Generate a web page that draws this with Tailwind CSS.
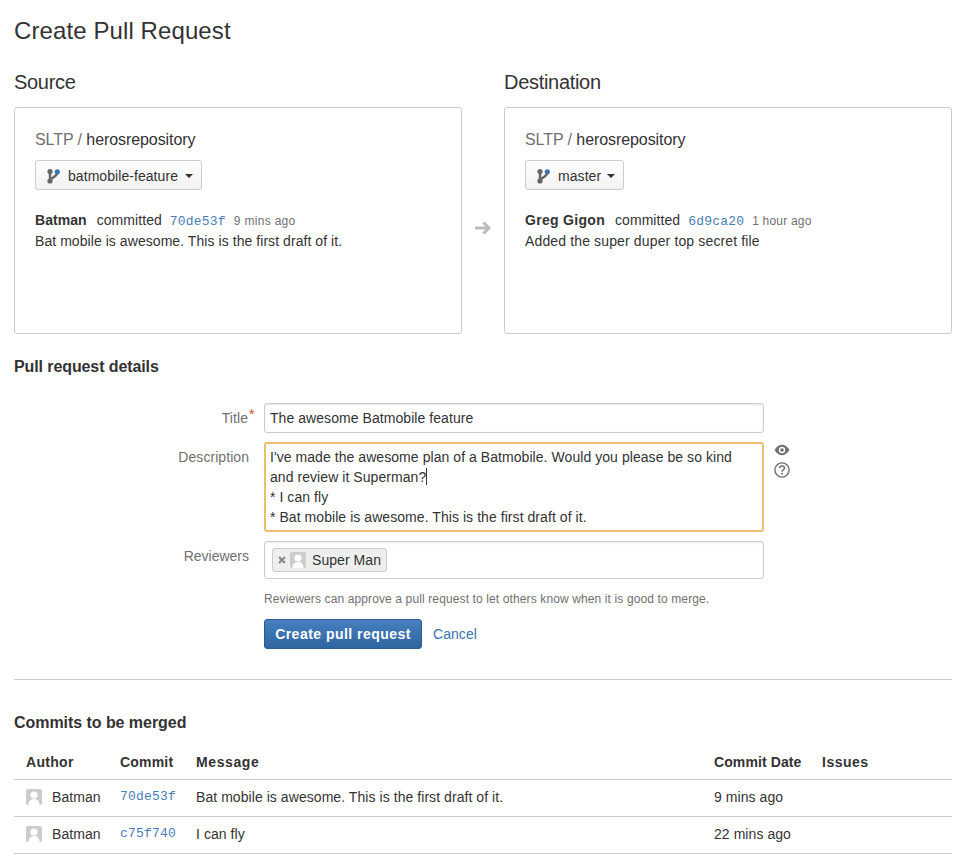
<!DOCTYPE html>
<html lang="en">
<head>
    <meta charset="UTF-8">
    <title>Create Pull Request</title>
    <script src="https://cdn.jsdelivr.net/npm/@tailwindcss/browser@4"></script>
</head>
<body class="bg-white text-[#333] font-['Liberation_Sans',Arial,sans-serif] text-[14px] leading-[20px] tracking-[0.06px]">
    <div class="pl-[14px] pr-[8px] h-[864px] overflow-hidden">
        <h1 class="text-[24px] leading-[30px] pt-[16px] text-[#333] tracking-[0.1px]">Create Pull Request</h1>

        <!-- Source / destination -->
        <div class="flex mt-[22px]">
            <div class="w-[448px]">
                <h2 class="text-[20px] leading-[28px] mb-[11px] tracking-[-0.3px]">Source</h2>
                <div class="h-[227px] border border-[#ccc] rounded-[3px] pt-[21px] px-[20px]">
                    <div class="text-[16px] leading-[22px] text-[#333] tracking-[-0.08px]"><span class="text-[#707070]">SLTP</span> <span class="text-[#707070]">/</span> herosrepository</div>
                    <button class="mt-[9px] h-[30px] flex items-center pl-[9px] pr-[8px] pt-[2px] border border-[#ccc] rounded-[3px] bg-gradient-to-b from-white to-[#f2f2f2]">
                        <svg class="w-[16px] h-[16px] mr-[7px]" viewBox="0 0 16 16"><path d="M5 4v9M12 5c0 4.500-6 3.500-7 8" stroke="#666" stroke-width="2.400" fill="none"/><circle cx="5" cy="3.500" r="2.600" fill="#666"/><circle cx="5" cy="13" r="2.600" fill="#666"/><circle cx="12.300" cy="3.800" r="2.600" fill="#3b73af"/></svg>
                        batmobile-feature
                        <span class="ml-[7px] w-0 h-0 border-x-[4px] border-x-transparent border-t-[4px] border-t-[#333]"></span>
                    </button>
                    <div class="mt-[20px] flex items-baseline">
                        <b>Batman</b><span class="ml-[10px]">committed</span>
                        <span class="ml-[8px] font-['Liberation_Mono',monospace] text-[13px] tracking-[0.2px] text-[#4a7db8]">70de53f</span>
                        <span class="ml-[8px] text-[12px] tracking-[0.3px] text-[#707070]">9 mins ago</span>
                    </div>
                    <div class="-mt-[1px]">Bat mobile is awesome. This is the first draft of it.</div>
                </div>
            </div>

            <div class="w-[42px] flex items-start justify-center pt-[153px]">
                <svg class="w-[16px] h-[14px]" viewBox="0 0 16 14"><path d="M0 7h13.500M8.500 1.500L14 7l-5.500 5.500" stroke="#bbb" stroke-width="3" fill="none"/></svg>
            </div>

            <div class="w-[448px]">
                <h2 class="text-[20px] leading-[28px] mb-[11px] tracking-[-0.3px]">Destination</h2>
                <div class="h-[227px] border border-[#ccc] rounded-[3px] pt-[21px] px-[20px]">
                    <div class="text-[16px] leading-[22px] text-[#333] tracking-[-0.08px]"><span class="text-[#707070]">SLTP</span> <span class="text-[#707070]">/</span> herosrepository</div>
                    <button class="mt-[9px] h-[30px] flex items-center pl-[9px] pr-[8px] pt-[2px] border border-[#ccc] rounded-[3px] bg-gradient-to-b from-white to-[#f2f2f2]">
                        <svg class="w-[16px] h-[16px] mr-[7px]" viewBox="0 0 16 16"><path d="M5 4v9M12 5c0 4.500-6 3.500-7 8" stroke="#666" stroke-width="2.400" fill="none"/><circle cx="5" cy="3.500" r="2.600" fill="#666"/><circle cx="5" cy="13" r="2.600" fill="#666"/><circle cx="12.300" cy="3.800" r="2.600" fill="#3b73af"/></svg>
                        master
                        <span class="ml-[6px] w-0 h-0 border-x-[4px] border-x-transparent border-t-[4px] border-t-[#333]"></span>
                    </button>
                    <div class="mt-[20px] flex items-baseline">
                        <b class="tracking-[0.3px]">Greg Gigon</b><span class="ml-[10px]">committed</span>
                        <span class="ml-[8px] font-['Liberation_Mono',monospace] text-[13px] tracking-[0.2px] text-[#4a7db8]">6d9ca20</span>
                        <span class="ml-[8px] text-[12px] tracking-[0.2px] text-[#707070]">1 hour ago</span>
                    </div>
                    <div class="-mt-[1px] tracking-[0.14px]">Added the super duper top secret file</div>
                </div>
            </div>
        </div>

        <h3 class="mt-[23px] text-[16px] leading-[20px] font-bold tracking-[-0.1px]">Pull request details</h3>

        <!-- Form -->
        <div class="mt-[26px] grid grid-cols-[235px_500px_auto] gap-x-[15px] gap-y-[9px]">
            <label class="relative text-right text-[#707070] pt-[5px] pr-[1px]">Title<span class="absolute left-[235px] top-[1px] text-[#d04437]">*</span></label>
            <div class="h-[30px] border border-[#ccc] rounded-[3px] px-[5px] leading-[28px] shadow-[inset_0_1px_2px_rgba(0,0,0,0.1)]">The awesome Batmobile feature</div>
            <div></div>

            <label class="text-right text-[#707070] pt-[5px]">Description</label>
            <div class="h-[90px] border-2 border-[#ebbf6f] rounded-[3px] px-[4px] pt-[3px]">
                I've made the awesome plan of a Batmobile. Would you please be so kind<br>and review it Superman?<span class="inline-block w-px h-[17px] bg-[#333] align-[-3px]"></span><br>* I can fly<br>* Bat mobile is awesome. This is the first draft of it.
            </div>
            <div class="-ml-[5px] pt-[2px] flex flex-col gap-[6px]">
                <svg class="w-[16px] h-[12px]" viewBox="0 0 16 12"><path d="M0.500 6C3 2 5.500 0.800 8 0.800S13 2 15.500 6C13 10 10.500 11.200 8 11.200S3 10 0.500 6Z" fill="#707070"/><circle cx="8" cy="6" r="3.200" fill="#fff"/><circle cx="8" cy="6" r="1.800" fill="#707070"/></svg>
                <svg class="w-[16px] h-[16px]" viewBox="0 0 16 16"><circle cx="8" cy="8" r="7.100" stroke="#707070" stroke-width="1.400" fill="none"/><path d="M5.500 6.200C5.500 4.700 6.700 4 8 4s2.500 .8 2.500 2.100C10.500 7.800 8 7.800 8 9.700" stroke="#707070" stroke-width="1.500" fill="none"/><circle cx="8" cy="11.800" r="1" fill="#707070"/></svg>
            </div>

            <label class="text-right text-[#707070] pt-[5px] tracking-[0px]">Reviewers</label>
            <div class="h-[38px] border border-[#ccc] rounded-[3px] px-[7px] pt-[6px] shadow-[inset_0_1px_2px_rgba(0,0,0,0.08)]">
                <div class="inline-flex items-center h-[24px] pl-[5px] pr-[5px] bg-[#eee] border border-[#ccc] rounded-[3px]">
                    <svg class="w-[8px] h-[8px] mr-[4px]" viewBox="0 0 8 8"><path d="M1 1l6 6M7 1l-6 6" stroke="#888" stroke-width="2"/></svg>
                    <svg class="w-[16px] h-[16px] mr-[6px] rounded-[2px]" viewBox="0 0 16 16"><rect width="16" height="16" fill="#ccc"/><circle cx="8" cy="6" r="3.600" fill="#fff"/><path d="M2.500 16c0-4 2.500-6 5.500-6s5.500 2 5.500 6z" fill="#fff"/></svg>
                    Super Man
                </div>
            </div>
            <div></div>
        </div>

        <div class="ml-[250px] mt-[11px] text-[12px] leading-[18px] tracking-[0.12px] text-[#707070]">Reviewers can approve a pull request to let others know when it is good to merge.</div>
        <div class="ml-[250px] mt-[11px] flex items-center">
            <button class="w-[158px] h-[30px] rounded-[3px] border border-[#2d5c88] bg-gradient-to-b from-[#4680c0] to-[#2f659f] text-white font-bold tracking-[0.47px]">Create pull request</button>
            <a class="ml-[11px] text-[#3b73af]">Cancel</a>
        </div>

        <hr class="mt-[30px] border-t border-[#ccc]">

        <h3 class="mt-[33px] text-[16px] leading-[20px] font-bold tracking-[-0.05px]">Commits to be merged</h3>

        <!-- Commits table -->
        <table class="mt-[9px] w-[938px] table-fixed border-collapse">
            <colgroup>
                <col class="w-[106px]"><col class="w-[76px]"><col class="w-[518px]"><col class="w-[108px]"><col>
            </colgroup>
            <thead>
                <tr class="border-b border-[#ccc] h-[37px] text-left">
                    <th class="pl-[12px] pt-[3px] tracking-[0.3px]">Author</th>
                    <th class="pt-[3px] tracking-[0.2px]">Commit</th>
                    <th class="pt-[3px] tracking-[0.6px]">Message</th>
                    <th class="pt-[3px] tracking-[0.1px]">Commit Date</th>
                    <th class="pt-[3px] tracking-[0.5px]">Issues</th>
                </tr>
            </thead>
            <tbody>
                <tr class="border-b border-[#ccc] h-[37px]">
                    <td class="pl-[12px] pb-[2px]">
                        <div class="flex items-center">
                            <svg class="w-[16px] h-[16px] mr-[10px] rounded-[2px]" viewBox="0 0 16 16"><rect width="16" height="16" fill="#ccc"/><circle cx="8" cy="6" r="3.600" fill="#fff"/><path d="M2.500 16c0-4 2.500-6 5.500-6s5.500 2 5.500 6z" fill="#fff"/></svg>
                            Batman
                        </div>
                    </td>
                    <td class="pb-[2px] font-['Liberation_Mono',monospace] text-[13px] tracking-[0.2px] text-[#4a7db8]">70de53f</td>
                    <td class="pb-[2px]">Bat mobile is awesome. This is the first draft of it.</td>
                    <td class="pb-[2px]">9 mins ago</td>
                    <td></td>
                </tr>
                <tr class="border-b border-[#ccc] h-[37px]">
                    <td class="pl-[12px] pb-[2px]">
                        <div class="flex items-center">
                            <svg class="w-[16px] h-[16px] mr-[10px] rounded-[2px]" viewBox="0 0 16 16"><rect width="16" height="16" fill="#ccc"/><circle cx="8" cy="6" r="3.600" fill="#fff"/><path d="M2.500 16c0-4 2.500-6 5.500-6s5.500 2 5.500 6z" fill="#fff"/></svg>
                            Batman
                        </div>
                    </td>
                    <td class="pb-[2px] font-['Liberation_Mono',monospace] text-[13px] tracking-[0.2px] text-[#4a7db8]">c75f740</td>
                    <td class="pb-[2px]">I can fly</td>
                    <td class="pb-[2px]">22 mins ago</td>
                    <td></td>
                </tr>
            </tbody>
        </table>
    </div>
</body>
</html>
